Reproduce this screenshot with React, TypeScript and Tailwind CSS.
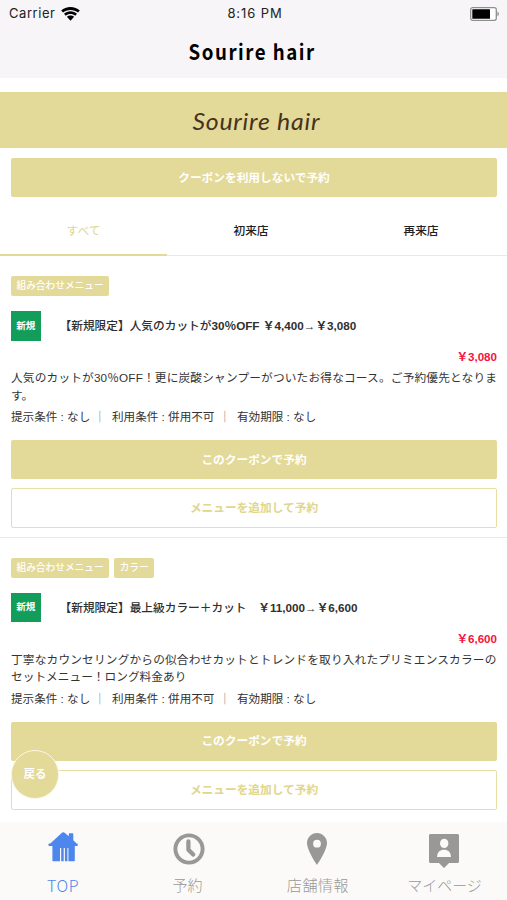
import React from 'react';

interface Coupon {
  tags: string[];
  title: React.ReactNode;
  price: string;
  lines: { text: string; className: string }[];
}

const coupons: Coupon[] = [
  {
    tags: ['組み合わせメニュー'],
    title: (
      <>
        【新規限定】人気のカットが<b>30％OFF ￥4,400→￥3,080</b>
      </>
    ),
    price: '￥3,080',
    lines: [
      { text: '人気のカットが30％OFF！更に炭酸シャンプーがついたお得なコース。ご予約優先となりま', className: 'tracking-[0.16px]' },
      { text: 'す。', className: '' },
    ],
  },
  {
    tags: ['組み合わせメニュー', 'カラー'],
    title: (
      <>
        【新規限定】最上級カラー＋カット　<b>￥11,000→￥6,600</b>
      </>
    ),
    price: '￥6,600',
    lines: [
      { text: '丁寧なカウンセリングからの似合わせカットとトレンドを取り入れたプリミエンスカラーの', className: 'tracking-[0.16px]' },
      { text: 'セットメニュー！ロング料金あり', className: '' },
    ],
  },
];

const WifiIcon = () => (
  <svg className="w-[19px] h-[14px]" viewBox="0 0 19 14">
    <path d="M9.5 0C5.9 0 2.6 1.3.2 3.5l1.8 2.1C4 3.9 6.6 2.9 9.5 2.9s5.5 1 7.5 2.7l1.8-2.1C16.4 1.3 13.1 0 9.5 0z" />
    <path d="M9.5 4.3c-2.500 0-4.800.9-6.500 2.400l1.800 2.100c1.300-1.100 2.900-1.700 4.700-1.700s3.400.6 4.700 1.700L16 6.700c-1.700-1.500-4-2.400-6.500-2.400z" />
    <path d="M9.5 8.500c-1.400 0-2.600.5-3.600 1.300l3.600 4 3.600-4c-1-.8-2.200-1.300-3.600-1.300z" />
  </svg>
);

const BatteryIcon = () => (
  <svg className="w-[29px] h-[14px]" viewBox="0 0 29 14">
    <rect x=".7" y=".7" width="25.6" height="12.6" rx="2" fill="#fff" stroke="#8f8f8f" strokeWidth="1.3" />
    <rect x="2.3" y="2.3" width="17.7" height="9.4" rx=".5" />
    <path d="M27.5 4.800c1.600.6 1.600 3.800 0 4.400z" fill="#777" />
  </svg>
);

const HouseIcon = () => (
  <svg className="w-[30px] h-[30px]" viewBox="0 0 30 30" fill="currentColor">
    <path d="M15.300.3c.7 0 1.200.3 1.900.9l3.600 3V1.800c0-.3.300-.6.600-.6h3.300c.3 0 .6.300.6.600v6.500l3.300 3.200h.3c1.200 0 1.200 2.500 0 2.500H26.800v14.700c0 .3-.3.500-.6.500H20.400V16h-1v13.200h-2.500V16h-1.200v13.200h-2.500V16H12v13.200H5c-.3 0-.6-.2-.6-.5V14H1.300c-1.200 0-1.200-2.500 0-2.500h1L13.400 1.200c.7-.6 1.200-.9 1.900-.9z" />
  </svg>
);

const ClockIcon = () => (
  <svg className="w-8 h-8" viewBox="0 0 32 32" fill="none" stroke="currentColor">
    <circle cx="16" cy="16" r="13.6" strokeWidth="3.9" />
    <path d="M15.4 8.500v8.300l4.800 4.800" strokeWidth="4.3" strokeLinecap="round" strokeLinejoin="round" />
  </svg>
);

const PinIcon = () => (
  <svg className="w-5 h-8" viewBox="0 0 20 32" fill="currentColor">
    <path fillRule="evenodd" d="M10 0C4.500 0 0 4.500 0 10c0 7.500 10 22 10 22s10-14.500 10-22C20 4.500 15.500 0 10 0zm0 6.800a3.900 3.900 0 1 1 0 7.800 3.900 3.900 0 0 1 0-7.800z" />
  </svg>
);

const ProfileIcon = () => (
  <svg className="w-[30px] h-[34px]" viewBox="0 0 30 34" fill="currentColor">
    <path d="M1.500 0h27c.8 0 1.500.7 1.500 1.500v26c0 .8-.7 1.500-1.500 1.500H20l-5 5-5-5H1.500C.7 29 0 28.300 0 27.500v-26C0 .7.700 0 1.500 0z" />
    <ellipse cx="15.2" cy="9.4" rx="4.2" ry="4.7" fill="#fbfaf9" />
    <path d="M8 23c.3-4.700 3-7.200 7-7.200s6.700 2.500 7 7.200z" fill="#fbfaf9" />
  </svg>
);

const navItems = [
  { label: 'TOP', icon: HouseIcon, itemClass: 'text-[#4d86ec] w-[125px]', iconClass: 'pt-[10px]', labelClass: 'text-[16px] tracking-[0.6px] pl-px' },
  { label: '予約', icon: ClockIcon, itemClass: 'text-[#999896] w-[127px]', iconClass: 'pt-[11px]', labelClass: 'text-[15px] pr-[2px]' },
  { label: '店舗情報', icon: PinIcon, itemClass: 'text-[#999896] w-[130px]', iconClass: 'pt-[11px]', labelClass: 'text-[15px] tracking-[0.6px] pl-[2px]' },
  { label: 'マイページ', icon: ProfileIcon, itemClass: 'text-[#999896] w-[124px]', iconClass: 'pt-3', labelClass: 'text-[15px] pl-[1px]' },
];

const CouponCard: React.FC<{ coupon: Coupon }> = ({ coupon }) => (
  <article className="h-[281.5px] pl-[11px] pr-[10px] pt-5 border-b border-[#e9e9e9] last:border-b-0">
    <div className="flex gap-[5px]">
      {coupon.tags.map((tag) => (
        <span key={tag} className="h-5 px-[5.5px] rounded-[2px] bg-[#e3d998] text-white text-[9.7px] leading-5 font-medium">{tag}</span>
      ))}
    </div>
    <div className="flex items-center mt-[15px] h-[30px]">
      <span className="w-[29.5px] h-[29.5px] bg-[#129d5b] text-white text-[9.6px] font-bold flex items-center justify-center">新規</span>
      <h2 className="ml-[19px] text-[11.7px] font-medium text-[#2f2f2f] leading-[18px]">{coupon.title}</h2>
    </div>
    <p className="mt-[7px] h-[18px] leading-[18px] text-right text-[11.6px] font-bold text-[#f5123f]">{coupon.price}</p>
    <div className="mt-[3px] text-[11.7px] leading-[17.5px] text-[#333]">
      {coupon.lines.map((line) => (
        <p key={line.text} className={line.className}>{line.text}</p>
      ))}
    </div>
    <div className="mt-1 flex h-[17px] text-[11.6px] leading-[17px] text-[#333]">
      <span className="w-[83px]">提示条件 : なし</span>
      <span className="w-[18px] text-[#777]">｜</span>
      <span className="w-[107px]">利用条件 : 併用不可</span>
      <span className="w-[18px] text-[#777]">｜</span>
      <span>有効期限 : なし</span>
    </div>
    <button className="mt-[15px] block w-full h-[39px] rounded-[2px] bg-[#e3d998] text-white text-[11.7px] font-bold">このクーポンで予約</button>
    <button className="mt-[9px] block w-full h-[40px] rounded-[2px] border-[1.5px] border-[#e8dfa5] bg-white text-[#e0d68e] text-[11.7px] font-bold">メニューを追加して予約</button>
  </article>
);

export default function App() {
  return (
    <div className="relative w-[507px] h-[900px] overflow-hidden bg-white flex flex-col whitespace-nowrap font-['Liberation_Sans','Noto_Sans_CJK_JP',sans-serif]">
      <header className="h-[78px] shrink-0 bg-[#f7f5f7] text-black">
        <div className="h-7 pl-[9px] pr-[8px] grid grid-cols-3 items-center text-[13px] font-[Inter,'Noto_Sans_CJK_JP',sans-serif]">
          <span className="flex items-center gap-[6px] text-[#222] tracking-[0.55px]">Carrier <WifiIcon /></span>
          <span className="text-center tracking-[0.9px] text-[#222] pl-[2px]">8:16 PM</span>
          <span className="flex justify-end"><BatteryIcon /></span>
        </div>
        <h1 className="h-[49px] pr-[3px] text-center text-[21px] leading-[47px] font-bold tracking-[1.7px] scale-x-[0.89] font-['Noto_Sans_CJK_JP',sans-serif]">Sourire hair</h1>
      </header>

      <div className="mt-[14px] h-14 shrink-0 bg-[#e3d998] text-[#46331f] text-center font-[Lato,sans-serif]">
        <span className="inline-block scale-x-[1.08] pl-[6px] italic text-[23px] leading-[58px] tracking-[0.7px]">Sourire hair</span>
      </div>

      <div className="pl-[11px] pr-[10px] pt-[10px] shrink-0">
        <button className="block w-full h-[39px] rounded-[2px] bg-[#e3d998] text-white text-[11.7px] font-bold">クーポンを利用しないで予約</button>
      </div>

      <nav className="mt-[10px] h-[49px] shrink-0 flex text-[11.7px] leading-[48px] text-center text-[#222] border-b border-[#e9e9e9]">
        <span className="w-[167px] h-[49px] text-[#ddd78e] border-b-2 border-[#e3d998]">すべて</span>
        <span className="w-[168px] font-medium">初来店</span>
        <span className="w-[172px] font-medium">再来店</span>
      </nav>

      <main className="shrink-0 h-[566px]">
        {coupons.map((coupon) => (
          <CouponCard key={coupon.price} coupon={coupon} />
        ))}
      </main>

      <button className="absolute left-[11px] top-[750px] w-12 h-[49px] rounded-full border border-[#fbf8e8] bg-[#e3d998] text-white text-[11.5px] font-bold">戻る</button>

      <footer className="h-[78px] absolute bottom-0 w-full flex bg-[#fbfaf9] font-['Noto_Sans_CJK_JP',sans-serif]">
        {navItems.map((item) => {
          const Icon = item.icon;
          return (
            <div key={item.label} className={`flex flex-col items-center shrink-0 ${item.itemClass}`}>
              <div className={`h-[46px] shrink-0 ${item.iconClass}`}><Icon /></div>
              <span className={`leading-[34px] font-light ${item.labelClass}`}>{item.label}</span>
            </div>
          );
        })}
      </footer>
    </div>
  );
}
